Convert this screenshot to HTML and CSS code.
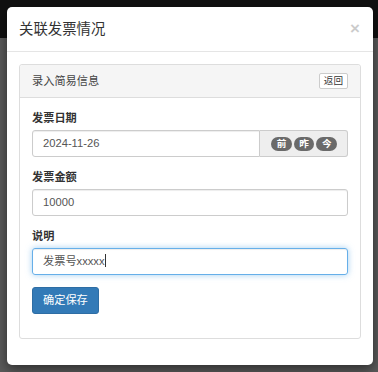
FILE: index.html
```html
<!DOCTYPE html>
<html lang="zh-CN">

<head>
  <meta charset="UTF-8">
  <title>关联发票情况</title>
  <link rel="stylesheet" href="styles.css">
</head>

<body>
  <div class="modal">
    <div class="modal-header">
      <h4 class="modal-title">关联发票情况</h4>
      <span class="close">&times;</span>
    </div>

    <div class="modal-body">
      <div class="panel">
        <div class="panel-heading">
          <span>录入简易信息</span>
          <span class="btn-xs">返回</span>
        </div>

        <div class="panel-body">
          <div class="form-group">
            <label>发票日期</label>
            <div class="input-group">
              <div class="form-control">2024-11-26</div>
              <div class="input-addon">
                <span class="badge">前</span>
                <span class="badge">昨</span>
                <span class="badge">今</span>
              </div>
            </div>
          </div>

          <div class="form-group">
            <label>发票金额</label>
            <div class="form-control">10000</div>
          </div>

          <div class="form-group">
            <label>说明</label>
            <div class="form-control focused">发票号xxxxx<span class="caret"></span></div>
          </div>

          <div class="form-group">
            <span class="btn-primary">确定保存</span>
          </div>
        </div>
      </div>
    </div>
  </div>
</body>

</html>
```

FILE: styles.css
```css
body {
  margin: 0;
  padding: 7px 5px 0 7px;
  height: 372px;
  box-sizing: border-box;
  background: linear-gradient(#111 0, #111 38px, #5a5a5a 38px);
  font-family: "Liberation Sans", "Noto Sans CJK SC", sans-serif;
  color: #333;
  overflow: hidden;
}

.modal {
  width: 366px;
  background: #fff;
  border-radius: 5px;
  box-shadow: 0 4px 12px rgba(0, 0, 0, 0.5);
}

.modal-header {
  display: flex;
  align-items: center;
  justify-content: space-between;
  padding: 12px;
  border-bottom: 1px solid #e5e5e5;
}

.modal-title {
  margin: 0;
  font-size: 14.4px;
  line-height: 20px;
  font-weight: normal;
  color: #333;
}

.close {
  font-size: 17px;
  line-height: 18px;
  font-weight: bold;
  color: #000;
  opacity: 0.2;
  margin-right: 1px;
}

.modal-body {
  padding: 12px;
}

.panel {
  border: 1px solid #ddd;
  border-radius: 3px;
  margin-bottom: 14px;
}

.panel-heading {
  display: flex;
  align-items: center;
  justify-content: space-between;
  padding: 8px 12px;
  height: 16px;
  background: #f5f5f5;
  border-bottom: 1px solid #ddd;
  border-radius: 3px 3px 0 0;
  font-size: 11.2px;
  line-height: 16px;
  color: #444;
}

.btn-xs {
  display: block;
  padding: 0 4px;
  font-size: 9.6px;
  line-height: 14px;
  background: #fff;
  border: 1px solid #ccc;
  border-radius: 2px;
  color: #333;
}

.panel-body {
  padding: 12px;
}

.form-group {
  margin-bottom: 12px;
}

label {
  display: block;
  margin-bottom: 4px;
  font-size: 11.2px;
  line-height: 16px;
  font-weight: bold;
  color: #333;
}

.form-control {
  height: 27px;
  box-sizing: border-box;
  padding: 0 10px;
  border: 1px solid #ccc;
  border-radius: 3px;
  box-shadow: inset 0 1px 1px rgba(0, 0, 0, 0.075);
  font-size: 11.2px;
  line-height: 25px;
  color: #555;
}

.form-control.focused {
  border-color: #66afe9;
  box-shadow: inset 0 1px 1px rgba(0, 0, 0, 0.075), 0 0 6px rgba(102, 175, 233, 0.6);
}

.caret {
  display: inline-block;
  width: 1px;
  height: 13px;
  background: #333;
  vertical-align: -2px;
}

.input-group {
  display: flex;
}

.input-group .form-control {
  flex: 1;
  border-radius: 3px 0 0 3px;
}

.input-addon {
  display: flex;
  align-items: center;
  gap: 2px;
  padding: 0 10px 0 11px;
  background: #eee;
  border: 1px solid #ccc;
  border-left: 0;
  border-radius: 0 3px 3px 0;
}

.badge {
  display: block;
  padding: 2px 5.5px;
  font-size: 9.6px;
  line-height: 10px;
  font-weight: bold;
  color: #fff;
  background: #6a6a6a;
  border-radius: 8px;
}

.btn-primary {
  display: inline-block;
  padding: 0 10px;
  height: 27px;
  box-sizing: border-box;
  font-size: 11.2px;
  line-height: 25px;
  color: #fff;
  background: #337ab7;
  border: 1px solid #2e6da4;
  border-radius: 3px;
}
```
